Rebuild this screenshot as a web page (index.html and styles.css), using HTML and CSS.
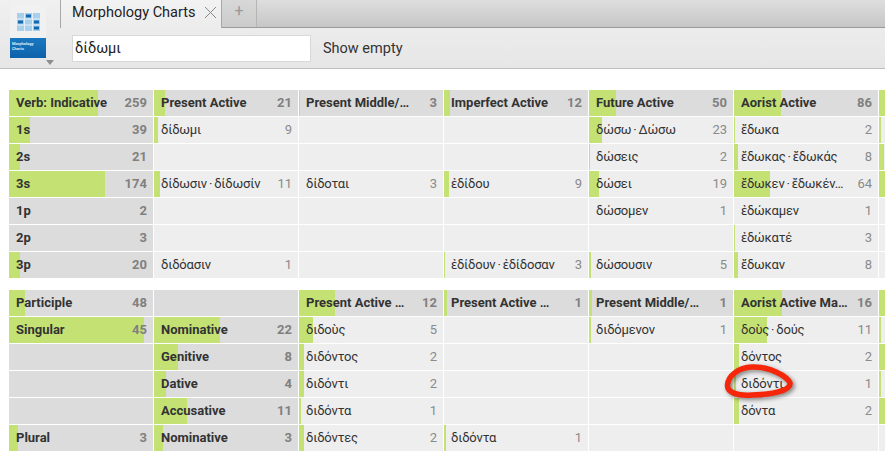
FILE: index.html
```html
<!DOCTYPE html>
<html lang="en">
<head>
<meta charset="UTF-8">
<title>Morphology Charts</title>
<link rel="stylesheet" href="styles.css">
</head>
<body>
<div class="top">
  <div class="logo-col">
    <div class="logo">
      <div class="logo-chart">
        <svg width="23" height="18" viewBox="0 0 23 18">
          <rect width="23" height="18" fill="#a9d0ea"/>
          <path d="M7.5 0v18M15.500 0v18M0 6h23M0 12h23" stroke="#e4eff7" stroke-width="1"/>
          <rect x="9" y="1.500" width="5" height="3" fill="#0f68b4"/>
          <rect x="1" y="7.500" width="5" height="3" fill="#0f68b4"/>
          <rect x="17" y="7.500" width="5" height="3" fill="#0f68b4"/>
          <rect x="17" y="13.500" width="5" height="3" fill="#0f68b4"/>
        </svg>
      </div>
      <div class="logo-title">Morphology<br>Charts</div>
    </div>
    <div class="logo-arrow"></div>
  </div>
  <div class="top-main">
    <div class="tabs">
      <div class="tab">
        <span>Morphology Charts</span>
        <svg class="tab-x" width="13" height="13" viewBox="0 0 13 13"><path d="M1 1l11 11M12 1L1 12" stroke="#888" stroke-width="1" fill="none"/></svg>
      </div>
      <div class="tab-new">+</div>
    </div>
    <div class="toolbar">
      <input class="search" type="text" value="δίδωμι">
      <span class="show-empty">Show empty</span>
    </div>
  </div>
</div>

<div class="charts">
  <div class="chart">
    <div class="cell dark"><i style="width:89px"></i><span>Verb: Indicative</span><b>259</b></div>
    <div class="cell dark"><i style="width:11px"></i><span>Present Active</span><b>21</b></div>
    <div class="cell dark"><i style="width:1px"></i><span>Present Middle/…</span><b>3</b></div>
    <div class="cell dark"><i style="width:6px"></i><span>Imperfect Active</span><b>12</b></div>
    <div class="cell dark"><i style="width:27px"></i><span>Future Active</span><b>50</b></div>
    <div class="cell dark"><i style="width:47px"></i><span>Aorist Active</span><b>86</b></div>
    <div class="cell dark"><i style="width:6px"></i></div>

    <div class="cell dark"><i style="width:21px"></i><span>1s</span><b>39</b></div>
    <div class="cell"><i style="width:4px"></i><span>δίδωμι</span><b>9</b></div>
    <div class="cell"></div>
    <div class="cell"></div>
    <div class="cell"><i style="width:13px"></i><span>δώσω · Δώσω</span><b>23</b></div>
    <div class="cell"><i style="width:1px"></i><span>ἔδωκα</span><b>2</b></div>
    <div class="cell"><i style="width:2px"></i></div>

    <div class="cell dark"><i style="width:11px"></i><span>2s</span><b>21</b></div>
    <div class="cell"></div>
    <div class="cell"></div>
    <div class="cell"></div>
    <div class="cell"><i style="width:1px"></i><span>δώσεις</span><b>2</b></div>
    <div class="cell"><i style="width:4px"></i><span>ἔδωκας · ἔδωκάς</span><b>8</b></div>
    <div class="cell"><i style="width:5px"></i></div>

    <div class="cell dark"><i style="width:96px"></i><span>3s</span><b>174</b></div>
    <div class="cell"><i style="width:6px"></i><span>δίδωσιν · δίδωσίν</span><b>11</b></div>
    <div class="cell"><span>δίδοται</span><b>3</b></div>
    <div class="cell"><i style="width:5px"></i><span>ἐδίδου</span><b>9</b></div>
    <div class="cell"><i style="width:10px"></i><span>δώσει</span><b>19</b></div>
    <div class="cell"><i style="width:36px"></i><span>ἔδωκεν · ἔδωκέν…</span><b>64</b></div>
    <div class="cell"><i style="width:6px"></i></div>

    <div class="cell dark"><span>1p</span><b>2</b></div>
    <div class="cell"></div>
    <div class="cell"></div>
    <div class="cell"></div>
    <div class="cell"><span>δώσομεν</span><b>1</b></div>
    <div class="cell"><span>ἐδώκαμεν</span><b>1</b></div>
    <div class="cell"></div>

    <div class="cell dark"><span>2p</span><b>3</b></div>
    <div class="cell"></div>
    <div class="cell"></div>
    <div class="cell"></div>
    <div class="cell"></div>
    <div class="cell"><i style="width:1px"></i><span>ἐδώκατέ</span><b>3</b></div>
    <div class="cell"></div>

    <div class="cell dark"><i style="width:11px"></i><span>3p</span><b>20</b></div>
    <div class="cell"><span>διδόασιν</span><b>1</b></div>
    <div class="cell"></div>
    <div class="cell"><i style="width:1px"></i><span>ἐδίδουν · ἐδίδοσαν</span><b>3</b></div>
    <div class="cell"><i style="width:2px"></i><span>δώσουσιν</span><b>5</b></div>
    <div class="cell"><i style="width:4px"></i><span>ἔδωκαν</span><b>8</b></div>
    <div class="cell"></div>
  </div>

  <div class="chart">
    <div class="cell dark"><i style="width:16px"></i><span>Participle</span><b>48</b></div>
    <div class="cell dark"></div>
    <div class="cell dark"><i style="width:36px"></i><span>Present Active …</span><b>12</b></div>
    <div class="cell dark"><i style="width:3px"></i><span>Present Active …</span><b>1</b></div>
    <div class="cell dark"><i style="width:3px"></i><span>Present Middle/…</span><b>1</b></div>
    <div class="cell dark"><i style="width:48px"></i><span>Aorist Active Ma…</span><b>16</b></div>
    <div class="cell dark"><i style="width:6px"></i></div>

    <div class="cell dark"><i style="width:135px"></i><span>Singular</span><b>45</b></div>
    <div class="cell dark"><i style="width:66px"></i><span>Nominative</span><b>22</b></div>
    <div class="cell"><i style="width:14px"></i><span>διδοὺς</span><b>5</b></div>
    <div class="cell"></div>
    <div class="cell"><i style="width:2px"></i><span>διδόμενον</span><b>1</b></div>
    <div class="cell"><i style="width:33px"></i><span>δοὺς · δούς</span><b>11</b></div>
    <div class="cell"><i style="width:2px"></i></div>

    <div class="cell dark"></div>
    <div class="cell dark"><i style="width:24px"></i><span>Genitive</span><b>8</b></div>
    <div class="cell"><i style="width:5px"></i><span>διδόντος</span><b>2</b></div>
    <div class="cell"></div>
    <div class="cell"></div>
    <div class="cell"><i style="width:5px"></i><span>δόντος</span><b>2</b></div>
    <div class="cell"><i style="width:6px"></i></div>

    <div class="cell dark"></div>
    <div class="cell dark"><i style="width:12px"></i><span>Dative</span><b>4</b></div>
    <div class="cell"><i style="width:5px"></i><span>διδόντι</span><b>2</b></div>
    <div class="cell"></div>
    <div class="cell"></div>
    <div class="cell"><i style="width:2px"></i><span>διδόντι</span><b>1</b></div>
    <div class="cell"><i style="width:2px"></i></div>

    <div class="cell dark"></div>
    <div class="cell dark"><i style="width:33px"></i><span>Accusative</span><b>11</b></div>
    <div class="cell"><i style="width:2px"></i><span>διδόντα</span><b>1</b></div>
    <div class="cell"></div>
    <div class="cell"></div>
    <div class="cell"><i style="width:5px"></i><span>δόντα</span><b>2</b></div>
    <div class="cell"><i style="width:6px"></i></div>

    <div class="cell dark"><i style="width:9px"></i><span>Plural</span><b>3</b></div>
    <div class="cell dark"><i style="width:9px"></i><span>Nominative</span><b>3</b></div>
    <div class="cell"><i style="width:5px"></i><span>διδόντες</span><b>2</b></div>
    <div class="cell"><i style="width:2px"></i><span>διδόντα</span><b>1</b></div>
    <div class="cell"></div>
    <div class="cell"></div>
    <div class="cell"></div>
  </div>
</div>

<svg class="scribble" width="885" height="458" viewBox="0 0 885 458">
  <path d="M790 383C787 376 770 366.500 752 367C738 367.500 728 376 727.500 385C727 393 738 396 752 395C770 394.500 791 391 790 383" fill="none" stroke="#f5260a" stroke-width="5.500" stroke-linecap="round"/>
</svg>
</body>
</html>
```

FILE: styles.css
```css
html, body {
  margin: 0;
  padding: 0;
  height: 100%;
  overflow: hidden;
  background-color: #fff;
}
body {
  position: relative;
  font-family: Roboto, "Noto Sans", sans-serif;
  color: #333;
}

/* top bar */
.top {
  display: flex;
  height: 68px;
  border-bottom: 1px solid #bdbdbd;
  background: linear-gradient(#f0f0f0, #e6e6e6);
}
.logo-col {
  width: 60px;
  flex-shrink: 0;
  padding: 5px 0 0 10px;
  box-sizing: border-box;
  position: relative;
}
.logo {
  width: 36px;
  height: 53px;
  display: flex;
  flex-direction: column;
  background-color: #f1f1f1;
}
.logo-chart {
  height: 33px;
  display: flex;
  align-items: center;
  justify-content: center;
}
.logo-chart svg {
  display: block;
}
.logo-title {
  flex: 1;
  padding: 3px 2px;
  font-size: 4px;
  line-height: 5px;
  font-weight: bold;
  color: #dcecf8;
  background: linear-gradient(#1a78c0, #0c62ab);
}
.logo-arrow {
  position: absolute;
  left: 46px;
  top: 60px;
  border-left: 4px solid transparent;
  border-right: 4px solid transparent;
  border-top: 5px solid #8e8e8e;
}
.top-main {
  flex: 1;
  min-width: 0;
  display: flex;
  flex-direction: column;
}
.tabs {
  display: flex;
  height: 28px;
  box-sizing: border-box;
  border-bottom: 1px solid #9a9a9a;
  background: linear-gradient(#dedede, #c6c6c6);
}
.tab {
  width: 162px;
  height: 28px;
  box-sizing: border-box;
  border-left: 1px solid #a8a8a8;
  border-right: 1px solid #a8a8a8;
  padding-left: 11px;
  display: flex;
  align-items: center;
  justify-content: space-between;
  padding-right: 4px;
  padding-bottom: 3px;
  font-size: 14.500px;
  color: #222;
  background: linear-gradient(#f2f2f2, #ececec);
}
.tab-new {
  width: 35px;
  height: 27px;
  box-sizing: border-box;
  border-right: 1px solid #b5b5b5;
  text-align: center;
  line-height: 22px;
  font-size: 16px;
  color: #999;
  background: linear-gradient(#d8d8d8, #cbcbcb);
}
.toolbar {
  flex: 1;
  display: flex;
  align-items: center;
  padding-left: 12px;
}
.search {
  width: 239px;
  height: 27px;
  box-sizing: border-box;
  border: 1px solid #d8d8d8;
  padding: 0 2px;
  margin: 0;
  font-family: inherit;
  font-size: 14.500px;
  color: #222;
  background-color: #fff;
  outline: none;
}
.show-empty {
  margin-left: 12px;
  font-size: 14.500px;
  color: #333;
}

/* charts */
.charts {
  padding: 21px 0 0 9px;
}
.chart {
  display: grid;
  grid-template-columns: repeat(6, 144px) 6px;
  grid-auto-rows: 26px;
  gap: 1px;
  margin-bottom: 12px;
}
.cell {
  position: relative;
  display: flex;
  align-items: center;
  justify-content: space-between;
  min-width: 0;
  overflow: hidden;
  padding: 0 6px 2px 7px;
  box-sizing: border-box;
  font-size: 13px;
  word-spacing: -1px;
  letter-spacing: -0.2px;
  white-space: nowrap;
  background-color: #eee;
}
.cell:nth-child(7n) {
  padding: 0;
}
.cell i {
  position: absolute;
  left: 0;
  top: 0;
  bottom: 0;
  background-color: #c3e273;
}
.cell span, .cell b {
  position: relative;
}
.cell b {
  font-weight: normal;
  letter-spacing: 0;
  color: #8a8a8a;
}
.dark {
  background-color: #dcdcdc;
  font-weight: bold;
  word-spacing: 0;
  letter-spacing: 0;
}
.dark b {
  font-weight: bold;
  color: #808080;
}

.scribble {
  position: absolute;
  left: 0;
  top: 0;
  pointer-events: none;
  filter: drop-shadow(2px 2px 2px rgba(0, 0, 0, 0.45));
}
```
